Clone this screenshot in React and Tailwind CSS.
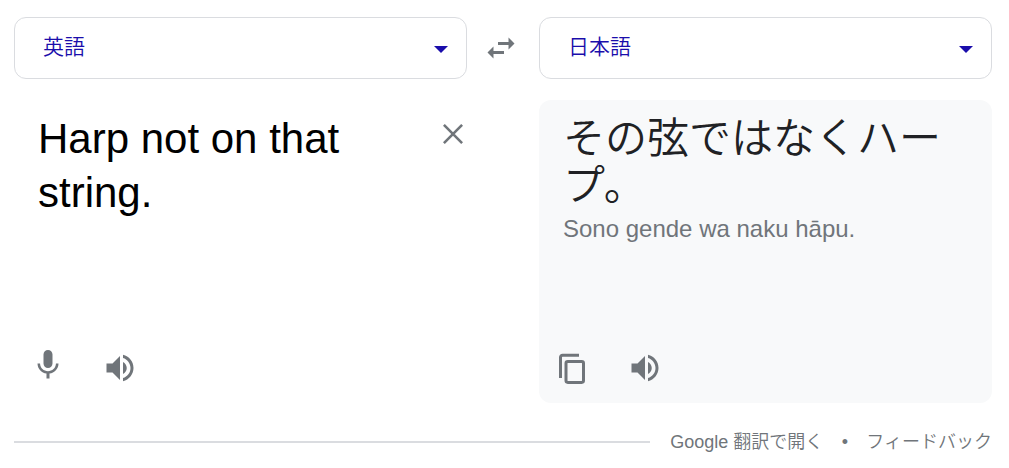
import { useState } from "react";

const languages = [
  { value: "en", label: "英語" },
  { value: "ja", label: "日本語" },
];

function LanguageSelect({ label, value, onChange }) {
  return (
    <div className="relative min-w-0 flex-1">
      <select
        aria-label={label}
        value={value}
        onChange={(e) => onChange(e.target.value)}
        className="block h-[62px] w-full appearance-none rounded-xl border border-[#dadce0] bg-white px-7 pb-0.5 text-[21px] leading-10 font-[350] text-[#1a0dab]"
      >
        {languages.map((l) => (
          <option key={l.value} value={l.value}>
            {l.label}
          </option>
        ))}
      </select>
      <svg
        className="pointer-events-none absolute top-[29px] right-[19px] h-[7px] w-[14px] fill-[#1a0dab]"
        viewBox="0 0 14 7"
        aria-hidden="true"
      >
        <path d="M0 0h14L7 7z" />
      </svg>
    </div>
  );
}

function IconButton({ label, className = "", children }) {
  return (
    <button
      type="button"
      aria-label={label}
      className={"flex size-9 shrink-0 items-center justify-center text-[#70757a] " + className}
    >
      {children}
    </button>
  );
}

function MaterialIcon({ d }) {
  return (
    <svg className="size-9 fill-current" viewBox="0 0 24 24" aria-hidden="true">
      <path d={d} />
    </svg>
  );
}

const swapPath =
  "M6.99 11L3 15l3.99 4v-3H14v-2H6.99v-3zM21 9l-3.99-4v3H10v2h7.01v3L21 9z";
const micPath =
  "M12 14c1.66 0 2.99-1.34 2.99-3L15 5c0-1.66-1.34-3-3-3S9 3.34 9 5v6c0 1.66 1.34 3 3 3zm5.3-3c0 3-2.54 5.1-5.3 5.1S6.7 14 6.7 11H5c0 3.41 2.72 6.23 6 6.72V21h2v-3.28c3.28-.48 6-3.3 6-6.72h-1.7z";
const volumePath =
  "M3 9v6h4l5 5V4L7 9H3zm13.5 3c0-1.77-1.02-3.29-2.5-4.03v8.05c1.48-.73 2.5-2.25 2.5-4.02zM14 3.23v2.06c2.89.86 5 3.54 5 6.71s-2.11 5.85-5 6.71v2.06c4.01-.91 7-4.49 7-8.77s-2.99-7.86-7-8.77z";

export default function App() {
  const [source, setSource] = useState("en");
  const [target, setTarget] = useState("ja");
  const [text, setText] = useState("Harp not on that string.");

  return (
    <main className="bg-white pt-[17px] pr-[17px] pl-3.5 font-['Liberation_Sans','Noto_Sans_CJK_JP',sans-serif]">
      <div className="flex items-center">
        <LanguageSelect label="翻訳元の言語" value={source} onChange={setSource} />
        <div className="flex w-[72px] shrink-0 justify-center pr-1">
          <IconButton label="言語を入れ替える">
            <MaterialIcon d={swapPath} />
          </IconButton>
        </div>
        <LanguageSelect label="翻訳先の言語" value={target} onChange={setTarget} />
      </div>

      <div className="mt-[21px] flex gap-[72px]">
        <section className="flex min-h-[303px] min-w-0 flex-1 flex-col justify-between pt-3">
          <div className="flex items-start">
            <textarea
              aria-label="翻訳するテキスト"
              value={text}
              onChange={(e) => setText(e.target.value)}
              rows={2}
              spellCheck={false}
              className="block min-w-0 flex-1 resize-none overflow-hidden pl-6 text-[42px] leading-[54px] text-black outline-none"
            />
            <IconButton label="クリア" className="ml-7 -mr-1 mt-1">
              <svg className="size-5" viewBox="0 0 20 20" fill="none" stroke="currentColor" strokeWidth="2.6" aria-hidden="true">
                <path d="M0.9 0.9l18.2 18.2M19.1 0.9L0.9 19.1" />
              </svg>
            </IconButton>
          </div>
          <div className="flex items-start gap-9 pb-[17px] pl-4">
            <IconButton label="音声入力" className="-mt-[3px]">
              <MaterialIcon d={micPath} />
            </IconButton>
            <IconButton label="原文を聞く">
              <MaterialIcon d={volumePath} />
            </IconButton>
          </div>
        </section>

        <section className="flex min-h-[303px] min-w-0 flex-1 flex-col justify-between rounded-xl bg-[#f8f9fa] pt-[15px]">
          <div className="px-6">
            <p lang="ja" className="text-[42px] leading-[47px] font-[350] text-[#202124]">
              その弦ではなくハープ。
            </p>
            <p className="mt-1 text-2xl leading-8 text-[#70757a]">Sono gende wa naku hāpu.</p>
          </div>
          <div className="flex items-start gap-9 pb-[17px] pl-4">
            <IconButton label="翻訳をコピー">
              <svg className="h-8 w-7" viewBox="0 0 28 32" fill="none" stroke="currentColor" strokeWidth="3" aria-hidden="true">
                <path d="M1.5 26V5.3a2 2 0 0 1 2-2H20" />
                <rect x="7" y="9.4" width="17.5" height="21" rx="1.8" />
              </svg>
            </IconButton>
            <IconButton label="翻訳を聞く">
              <MaterialIcon d={volumePath} />
            </IconButton>
          </div>
        </section>
      </div>

      <footer className="mt-[25px] flex items-center text-lg leading-7 font-[350] text-[#70757a]">
        <hr className="mr-5 flex-1 border-t-2 border-[#dadce0]" />
        <a href="#translate">Google 翻訳で開く</a>
        <span className="w-[43px] text-center" aria-hidden="true">
          •
        </span>
        <a href="#feedback">フィードバック</a>
      </footer>
    </main>
  );
}
